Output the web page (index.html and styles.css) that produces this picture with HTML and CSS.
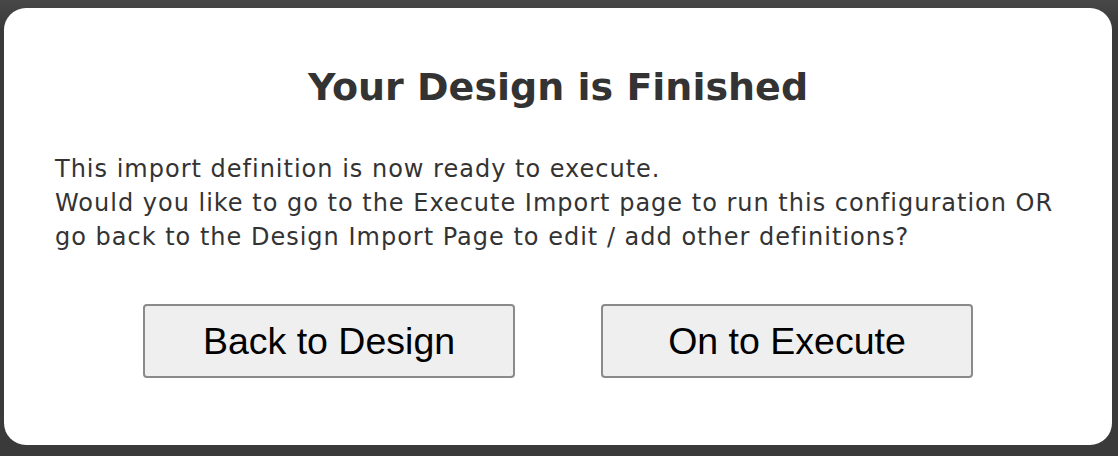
FILE: index.html
```html
<!DOCTYPE html>
<html>
<head>
<meta charset="utf-8">
<link rel="stylesheet" href="styles.css">
</head>
<body>
<div class="backdrop">
  <div class="dialog">
    <h1 class="title">Your Design is Finished</h1>
    <p class="message">This import definition is now ready to execute.<br>Would you like to go to the Execute Import page to run this configuration OR<br>go back to the Design Import Page to edit / add other definitions?</p>
    <div class="actions">
      <button class="btn">Back to Design</button>
      <button class="btn">On to Execute</button>
    </div>
  </div>
</div>
</body>
</html>
```
FILE: styles.css
```css
html, body {
  margin: 0;
  padding: 0;
}
body {
  width: 1118px;
  height: 456px;
  overflow: hidden;
  background: #3b3b3b;
}
.backdrop {
  height: 456px;
  box-sizing: border-box;
  padding: 8px 6px 11px 4px;
  background: linear-gradient(#474747, #3a3a3a 30px, #3a3a3a);
}
.dialog {
  height: 100%;
  box-sizing: border-box;
  background: #fff;
  border-radius: 22px;
  padding: 52px 0 0 51px;
  color: #333;
  font-family: "DejaVu Sans", sans-serif;
}
.title {
  margin: 0 0 0 -51px;
  text-align: center;
  font-size: 38px;
  font-weight: 700;
  line-height: 54px;
}
.message {
  margin: 38px 0 0 0;
  font-size: 24px;
  letter-spacing: 1px;
  line-height: 34px;
}
.actions {
  display: flex;
  justify-content: center;
  gap: 86px;
  margin: 50px 0 0 -51px;
}
.btn {
  width: 372px;
  height: 74px;
  box-sizing: border-box;
  border: 2px solid #8a8a8a;
  border-radius: 4px;
  background: #efefef;
  color: #000;
  font-family: "Liberation Sans", Arial, sans-serif;
  font-size: 37.5px;
  padding: 0;
}
```
